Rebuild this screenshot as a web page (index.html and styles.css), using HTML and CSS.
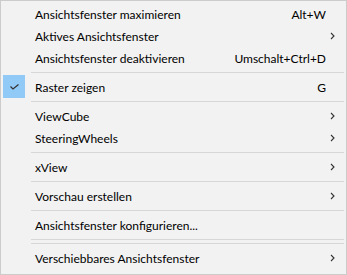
FILE: index.html
```html
<!DOCTYPE html>
<html lang="de">
<head>
    <meta charset="UTF-8">
    <title>Ansichtsfenster-Menü</title>
    <link rel="stylesheet" href="styles.css">
</head>
<body>
    <div class="menu">
        <div class="item">
            <span class="icon"></span>
            <span class="label">Ansichtsfenster maximieren</span>
            <span class="key">Alt+W</span>
        </div>
        <div class="item has-sub">
            <span class="icon"></span>
            <span class="label">Aktives Ansichtsfenster</span>
            <svg class="arrow" viewBox="0 0 5 8"><path d="M1 1L4 4L1 7" fill="none" stroke="#333" stroke-width="1.1"/></svg>
        </div>
        <div class="item">
            <span class="icon"></span>
            <span class="label">Ansichtsfenster deaktivieren</span>
            <span class="key">Umschalt+Ctrl+D</span>
        </div>
        <div class="sep"></div>
        <div class="item">
            <span class="icon checked">
                <svg viewBox="0 0 9 6"><path d="M0.5 2.5L3 5L8.5 0.5" fill="none" stroke="#333" stroke-width="1.2"/></svg>
            </span>
            <span class="label">Raster zeigen</span>
            <span class="key">G</span>
        </div>
        <div class="sep"></div>
        <div class="item has-sub">
            <span class="icon"></span>
            <span class="label">ViewCube</span>
            <svg class="arrow" viewBox="0 0 5 8"><path d="M1 1L4 4L1 7" fill="none" stroke="#333" stroke-width="1.1"/></svg>
        </div>
        <div class="item has-sub">
            <span class="icon"></span>
            <span class="label">SteeringWheels</span>
            <svg class="arrow" viewBox="0 0 5 8"><path d="M1 1L4 4L1 7" fill="none" stroke="#333" stroke-width="1.1"/></svg>
        </div>
        <div class="sep"></div>
        <div class="item has-sub">
            <span class="icon"></span>
            <span class="label">xView</span>
            <svg class="arrow" viewBox="0 0 5 8"><path d="M1 1L4 4L1 7" fill="none" stroke="#333" stroke-width="1.1"/></svg>
        </div>
        <div class="sep"></div>
        <div class="item has-sub">
            <span class="icon"></span>
            <span class="label">Vorschau erstellen</span>
            <svg class="arrow" viewBox="0 0 5 8"><path d="M1 1L4 4L1 7" fill="none" stroke="#333" stroke-width="1.1"/></svg>
        </div>
        <div class="sep"></div>
        <div class="item">
            <span class="icon"></span>
            <span class="label">Ansichtsfenster konfigurieren...</span>
        </div>
        <div class="sep"></div>
        <div class="sep"></div>
        <div class="item has-sub">
            <span class="icon"></span>
            <span class="label">Verschiebbares Ansichtsfenster</span>
            <svg class="arrow" viewBox="0 0 5 8"><path d="M1 1L4 4L1 7" fill="none" stroke="#333" stroke-width="1.1"/></svg>
        </div>
    </div>
</body>
</html>
```

FILE: styles.css
```css
body {
    margin: 0;
    font-family: Lato, 'Liberation Sans', sans-serif;
    font-size: 12px;
    color: #000;
    background: #fff;
}

.menu {
    width: 341px;
    height: 269px;
    padding: 2px;
    background: #f2f2f2;
    border: 1px solid #cccccc;
}

.item {
    display: flex;
    align-items: center;
    height: 22px;
}

.icon {
    width: 22px;
    height: 22px;
    margin-right: 10px;
    display: flex;
    align-items: center;
    justify-content: center;
}

.icon.checked {
    background: #91c9f7;
    height: 23px;
    margin-top: -1px;
}

.icon svg {
    width: 9px;
    height: 6px;
}

.label {
    flex: 1;
    white-space: nowrap;
}

.key {
    margin-right: 18px;
}

.arrow {
    width: 5px;
    height: 8px;
    margin-right: 9px;
}

.sep {
    height: 1px;
    margin: 3px 0 3px 28px;
    background: #d7d7d7;
}
```
